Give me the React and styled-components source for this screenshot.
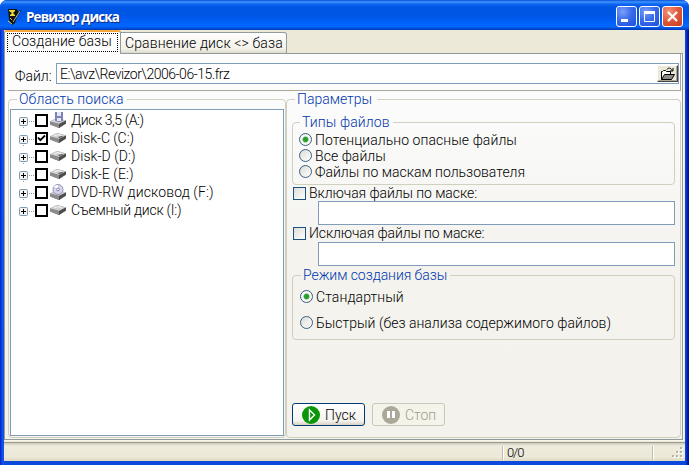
import React from 'react';
import styled, { createGlobalStyle, css } from 'styled-components';

const Global = createGlobalStyle`
  * { box-sizing: border-box; }
  body { margin: 0; background: #fff; overflow: hidden; }
`;

const Window = styled.div`
  width: 689px;
  height: 465px;
  display: flex;
  flex-direction: column;
  border-radius: 7px 7px 0 0;
  overflow: hidden;
  background: linear-gradient(90deg, #0020c4 0, #0a4be6 2px, #1a5cf0 3px, #0b48dc 4px, #0b48dc 685px, #0a3cd2 686px, #0014a4 688px, #001090 689px);
  font: 300 14px/16px Roboto, "Liberation Sans", sans-serif;
  color: #000;
`;

const TitleBar = styled.header`
  flex: none;
  height: 30px;
  display: flex;
  align-items: center;
  padding: 3px 6px 0 7px;
  background: linear-gradient(#0a50d8 0, #3d95ff 2px, #0f66f2 4px, #0057e6 7px, #0055e3 14px, #005cf2 20px, #0066ff 25px, #0062f8 27px, #0046c8 29px, #0038b4 30px);
`;

const Title = styled.h1`
  flex: 1;
  margin: 0 0 0 5px;
  font: bold 13.5px/16px "Open Sans", "Noto Sans", sans-serif;
  letter-spacing: -0.9px;
  color: #fff;
  text-shadow: 1px 1px 0 #0a2a90;
`;

const CaptionButton = styled.button`
  width: 21px;
  height: 21px;
  padding: 0;
  margin-left: 2px;
  display: grid;
  place-items: center;
  border: 1px solid #fff;
  border-radius: 3px;
  background: ${p => p.$close
    ? 'radial-gradient(circle at 30% 25%, #f09478 0, #e0583a 50%, #c43c18 100%)'
    : 'radial-gradient(circle at 30% 25%, #7ba0f6 0, #3a6cec 45%, #1b4ed8 100%)'};
`;

const Client = styled.main`
  flex: 1;
  min-height: 0;
  margin: 0 4px 4px;
  display: flex;
  flex-direction: column;
  background: #ece9d8;
`;

const Tabs = styled.nav`
  flex: none;
  height: 24px;
  margin-bottom: -1px;
  display: flex;
  align-items: flex-end;
  z-index: 1;
`;

const Tab = styled.div`
  white-space: nowrap;
  ${p => p.$active ? css`
    width: 117px;
    height: 24px;
    padding: 1px 2px 1px;
    letter-spacing: 0.08px;
    border-top: 2px solid #f5a73c;
    border-left: 1px solid #919b9c;
    border-right: 1px solid #919b9c;
    border-radius: 3px 3px 0 0;
    background: #fdfdfd;
  ` : css`
    width: 166px;
    height: 22px;
    margin-bottom: 0;
    padding: 2px 0 0 4px;
    letter-spacing: 0.12px;
    border: 1px solid #919b9c;
    border-left: 0;
    border-radius: 0 3px 0 0;
    background: linear-gradient(#fff, #f2f1ea 80%, #dddacb);
  `}
`;

const Focus = styled.span`
  display: block;
  height: 19px;
  padding: 0 0 0 4px;
  line-height: 15px;
  border: 1px dotted #000;
`;

const Page = styled.section`
  flex: none;
  height: 387px;
  margin-right: 2px;
  padding: 0 1px 1px 3px;
  border: 1px solid #919b9c;
  box-shadow: 1px 1px 0 #f8f7f0;
  background: linear-gradient(#fdfdfe 0, #fbfbfb 60px, #f4f3ee 200px, #f3f2ec 100%);
`;

const FilePanel = styled.div`
  height: 37px;
  padding: 9px 1px 0 6px;
  display: flex;
  align-items: flex-start;
  border-bottom: 1px solid #aca899;
  border-right: 1px solid #aca899;
  white-space: nowrap;
`;

const FileLabel = styled.label`
  width: 42px;
  padding: 5px 0 0 1px;
`;

const Field = styled.div`
  display: block;
  background: #fff;
  border: 1px solid #7f9db9;
`;

const FileField = styled(Field)`
  flex: 1;
  height: 21px;
  display: flex;
  justify-content: space-between;
  padding: 1px 0 0 3px;
  line-height: 18px;
  letter-spacing: -0.48px;
`;

const MaskField = styled(Field)`
  height: 24px;
  margin: 0 0 ${p => p.$gap || 0}px 26px;
`;

const BrowseButton = styled.button`
  width: 21px;
  height: 17px;
  padding: 0;
  display: grid;
  place-items: center;
  background: #ece9d8;
  border: 1px solid;
  border-color: #fff #444 #444 #fff;
  box-shadow: inset -1px -1px 0 #aca899;
`;

const Columns = styled.div`
  display: grid;
  grid-template-columns: 278px 395px;
  height: 347px;
`;

const Group = styled.fieldset`
  min-width: 0;
  height: ${p => p.$h}px;
  margin: 0;
  padding: ${p => p.$pad};
  border: 1px solid #d0d0bf;
  border-radius: 4px;
`;

const Legend = styled.legend`
  height: 16px;
  margin-left: ${p => p.$ml}px;
  padding: 0 ${p => p.$pr || 3}px 0 2px;
  color: #0036ac;
  white-space: nowrap;
  letter-spacing: ${p => p.$ls || 0}px;
`;

const Tree = styled.ul`
  height: 327px;
  margin: 0;
  padding: 1px 0 0 8px;
  list-style: none;
  background: #fff;
  border: 1px solid #7f9db9;
`;

const TreeRow = styled.li`
  height: 18px;
  display: grid;
  grid-template-columns: 16px 15px 21px 1fr;
  white-space: nowrap;
  letter-spacing: ${p => p.$ls}px;
  background: ${p => p.$last ? 'none' : 'repeating-linear-gradient(#999 0 1px, #fff 1px 2px) 4px 8px / 1px 100% no-repeat'};
`;

const Expander = styled.svg`
  display: block;
  margin-top: 6px;
`;

const TreeCheck = styled.span`
  width: 13px;
  height: 13px;
  margin-top: 3px;
  border: 2px solid #000;
  background: #fff;
  display: grid;
  place-items: center;
`;

const DriveSvg = styled.svg`
  display: block;
  margin-top: 1px;
`;

const TreeLabel = styled.span`
  padding-top: 1px;
`;

const Option = styled.label`
  display: flex;
  height: 16px;
  gap: 3px;
  margin-bottom: ${p => p.$gap || 0}px;
  white-space: nowrap;
  letter-spacing: ${p => p.$ls || 0}px;
`;

const Radio = styled.span`
  flex: none;
  width: 13px;
  height: 13px;
  margin-top: 1px;
  border: 1px solid #3b5f83;
  border-radius: 50%;
  background: ${p => p.$on
    ? 'radial-gradient(circle, #2a9c2a 0 2px, #55b855 2.6px, #f6f6f2 3.4px)'
    : 'linear-gradient(135deg, #dcdcd4, #fff)'};
`;

const CheckRow = styled(Option)`
  gap: 3px;
  padding-left: 1px;
`;

const Check = styled.span`
  flex: none;
  width: 13px;
  height: 13px;
  margin-top: 2px;
  border: 1px solid #1c5180;
  background: linear-gradient(135deg, #dcdcd7, #fff);
`;

const Actions = styled.div`
  display: flex;
  gap: 7px;
  margin-top: 63px;
`;

const ActionButton = styled.button`
  width: 73px;
  height: 23px;
  padding: 0 0 0 9px;
  display: flex;
  align-items: center;
  gap: 5px;
  font: inherit;
  border-radius: 3px;
  border: 1px solid ${p => p.disabled ? '#c9c7ba' : '#003c74'};
  background: ${p => p.disabled ? '#f5f4ea' : 'linear-gradient(#fff, #f4f3ee 80%, #d8d0c4)'};
  color: ${p => p.disabled ? '#a09e90' : '#000'};
`;

const StatusBar = styled.footer`
  flex: 1;
  margin-top: 2px;
  padding: 3px 0 1px;
  display: grid;
  grid-template-columns: 499px 150px 1fr;
  border-top: 1px solid #9d9a8c;
  background: linear-gradient(#cdcabc 0, #efecdf 3px, #ece9d8 14px, #dcd8c2 100%);
`;

const StatusCell = styled.span`
  border-right: 1px solid #c0bdaa;
  box-shadow: 1px 0 0 #fff;
  padding-left: 4px;
  font-size: 13px;
  line-height: 13px;
  letter-spacing: -1.1px;
`;

const Grip = styled.svg`
  justify-self: end;
  align-self: end;
  display: block;
`;

const AppIcon = () => (
  <svg width="14" height="16" viewBox="0 0 14 16">
    <path d="M1 0h9l1 3 2-2 1 1-4 6-2 6-3 2-3-5z" fill="#111" />
    <path d="M2 1h6v1L6 4l2 2v1H3V6l2-2-3-2z" fill="#e8dc38" />
    <path d="M13 2L6 13" stroke="#b8b8a0" />
    <path d="M1 12l4 3M3 9l2 2" stroke="#d8c840" />
  </svg>
);

const Slab = ({ y = 4 }) => (
  <g transform={`translate(0 ${y})`}>
    <path d="M0 3.5L7 0l9 2.5v3L9 10 0 6.5z" fill="#777" />
    <path d="M0 3.5L7 0l9 2.5L9 6z" fill="#cfcfcf" />
    <path d="M9 6l7-3.5v3L9 10z" fill="#4d4d4d" />
    <path d="M0 3.5L9 6v4L0 6.5z" fill="#8b8b8b" />
    <path d="M4 3l4-1.5L12 3" stroke="#f4f4f4" fill="none" />
  </g>
);

const DriveIcon = ({ kind }) => (
  <DriveSvg width="16" height="16" viewBox="0 0 16 16">
    <Slab y={kind === 'floppy' || kind === 'dvd' ? 6 : 3} />
    {kind === 'hdd' && <path d="M8 7l4-1 1 1-4 1z" fill="#555" />}
    {kind === 'floppy' && (
      <g>
        <path d="M5 0h8v9l-4 1-4-1z" fill="#7d82b8" />
        <path d="M7 0h4v4H7zM7 6h4v3H7z" fill="#e4e6f4" />
      </g>
    )}
    {kind === 'dvd' && (
      <g>
        <circle cx="8" cy="5.5" r="5" fill="#d4d4ec" stroke="#9292b4" />
        <path d="M8 5.5L4 2.5A5 5 0 0 1 8 1z" fill="#fff" />
        <circle cx="8" cy="5.5" r="1.4" fill="#fff" stroke="#8080a8" />
      </g>
    )}
  </DriveSvg>
);

const DRIVES = [
  { name: 'Диск 3,5 (A:)', kind: 'floppy', ls: -0.43 },
  { name: 'Disk-C (C:)', kind: 'hdd', ls: -0.08, on: true },
  { name: 'Disk-D (D:)', kind: 'hdd', ls: 0.05 },
  { name: 'Disk-E (E:)', kind: 'hdd', ls: 0.1 },
  { name: 'DVD-RW дисковод (F:)', kind: 'dvd', ls: 0.12 },
  { name: 'Съемный диск (I:)', kind: 'removable', ls: -0.25 },
];

export default function App() {
  return (
    <Window>
      <Global />
      <TitleBar>
        <AppIcon />
        <Title>Ревизор диска</Title>
        <CaptionButton aria-label="Свернуть">
          <svg width="19" height="19"><path d="M4 12h7v3H4z" fill="#fff" /></svg>
        </CaptionButton>
        <CaptionButton aria-label="Развернуть">
          <svg width="19" height="19"><path d="M4.5 5h10v9.5h-10z" fill="none" stroke="#fff" /><path d="M4 4h11v3H4z" fill="#fff" /></svg>
        </CaptionButton>
        <CaptionButton $close aria-label="Закрыть">
          <svg width="19" height="19"><path d="M5 5l9 9M14 5l-9 9" stroke="#fff" strokeWidth="2.2" /></svg>
        </CaptionButton>
      </TitleBar>
      <Client>
        <Tabs>
          <Tab $active><Focus>Создание базы</Focus></Tab>
          <Tab>Сравнение диск &lt;&gt; база</Tab>
        </Tabs>
        <Page>
          <FilePanel>
            <FileLabel>Файл:</FileLabel>
            <FileField>
              <span>E:\avz\Revizor\2006-06-15.frz</span>
              <BrowseButton aria-label="Обзор">
                <svg width="16" height="14" viewBox="0 0 16 14">
                  <path d="M1.5 12.5v-8h1l1-1h2l1 1h4v3" fill="#fff" stroke="#000" />
                  <path d="M1.5 12.5l3-5h10l-3 5z" fill="#8c8c8c" stroke="#000" />
                  <path d="M7 2.5c1-2 4-2 5 1M13 1v3h-3" fill="none" stroke="#000" />
                </svg>
              </BrowseButton>
            </FileField>
          </FilePanel>
          <Columns>
            <Group $h={347} $pad="2px 1px 1px">
              <Legend $ml={7} $ls={0.12}>Область поиска</Legend>
              <Tree>
                {DRIVES.map((d, i) => (
                  <TreeRow key={d.name} $ls={d.ls} $last={i === DRIVES.length - 1}>
                    <Expander width="16" height="9">
                      <path d="M10 4.5h6" stroke="#999" strokeDasharray="1 1" />
                      <rect x=".5" y=".5" width="8" height="8" rx="1" fill="#f4f3ee" stroke="#7b98b5" />
                      <path d="M2 4.5h5M4.5 2v5" stroke="#000" />
                    </Expander>
                    <TreeCheck>
                      {d.on && <svg width="9" height="9"><path d="M1 3.5l2.3 2.7L8 1.5" fill="none" stroke="#000" strokeWidth="1.8" /></svg>}
                    </TreeCheck>
                    <DriveIcon kind={d.kind} />
                    <TreeLabel>{d.name}</TreeLabel>
                  </TreeRow>
                ))}
              </Tree>
            </Group>
            <Group $h={347} $pad="7px 5px 0">
              <Legend $ml={3} $pr={5}>Параметры</Legend>
              <Group $h={71} $pad="2px 6px 0">
                <Legend $ml={1} $ls={0.12}>Типы файлов</Legend>
                <Option $ls={0.07}><Radio $on />Потенциально опасные файлы</Option>
                <Option $ls={0.05}><Radio />Все файлы</Option>
                <Option $ls={0}><Radio />Файлы по маскам пользователя</Option>
              </Group>
              <CheckRow $ls={-0.08}><Check />Включая файлы по маске:</CheckRow>
              <MaskField />
              <CheckRow $ls={-0.13} $gap={1}><Check />Исключая файлы по маске:</CheckRow>
              <MaskField $gap={1} />
              <Group $h={73} $pad="6px 7px 0">
                <Legend $ml={1} $ls={-0.06}>Режим создания базы</Legend>
                <Option $ls={0.1} $gap={10}><Radio $on />Стандартный</Option>
                <Option $ls={0.02}><Radio />Быстрый (без анализа содержимого файлов)</Option>
              </Group>
              <Actions>
                <ActionButton>
                  <svg width="18" height="18"><circle cx="9" cy="9" r="9" fill="#0a960a" /><path d="M7.5 4v10l5-5z" fill="#0a960a" stroke="#fff" strokeWidth="1.4" /></svg>
                  Пуск
                </ActionButton>
                <ActionButton disabled>
                  <svg width="18" height="18"><circle cx="9" cy="9" r="9" fill="#aca899" /><path d="M5 5h3v7H5zM10 5h3v7h-3z" fill="#fff" /></svg>
                  Стоп
                </ActionButton>
              </Actions>
            </Group>
          </Columns>
        </Page>
        <StatusBar>
          <StatusCell />
          <StatusCell>0/0</StatusCell>
          <Grip width="13" height="13">
            {[[8, 0], [4, 4], [8, 4], [0, 8], [4, 8], [8, 8]].map(([x, y]) => (
              <g key={`${x}-${y}`}>
                <rect x={x + 1} y={y + 1} width="2" height="2" fill="#fff" />
                <rect x={x} y={y} width="2" height="2" fill="#b8b4a2" />
              </g>
            ))}
          </Grip>
        </StatusBar>
      </Client>
    </Window>
  );
}
